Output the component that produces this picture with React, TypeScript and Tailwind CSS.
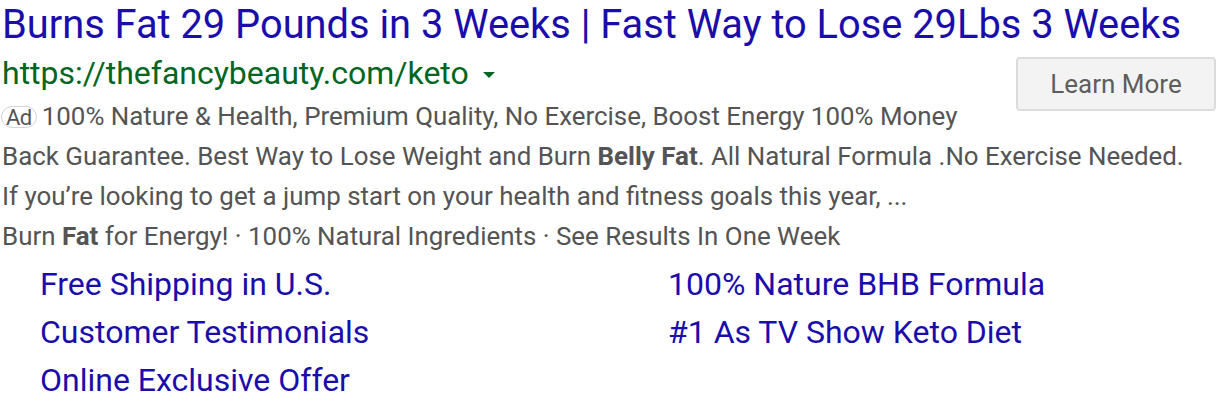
import React from 'react';

const sitelinks = [
  ['Free Shipping in U.S.', '100% Nature BHB Formula'],
  ['Customer Testimonials', '#1 As TV Show Keto Diet'],
  ['Online Exclusive Offer', ''],
];

export default function App() {
  return (
    <div className="w-[1216px] h-[410px] bg-white overflow-hidden font-['Roboto',sans-serif] pl-[2px]">
      <h1 className="text-[39.8px] leading-[50px] text-[#1a0dab] whitespace-nowrap">
        Burns Fat 29 Pounds in 3 Weeks | Fast Way to Lose 29Lbs 3 Weeks
      </h1>
      <button className="float-right mt-[7px] w-[200px] h-[54px] rounded-[4px] border-2 border-[#dcdcdc] bg-[#f3f3f3] text-[26px] text-[#5e5e5e]">
        Learn More
      </button>
      <div className="flex items-center h-[46px] text-[32px] text-[#006621]">
        <span>https://thefancybeauty.com/keto</span>
        <span className="ml-[14px] mt-[4px] w-0 h-0 border-x-[6px] border-x-transparent border-t-[6px] border-t-[#006621]" />
      </div>
      <div className="text-[25.9px] leading-[40px] text-[#545454] whitespace-nowrap">
        <div>
          <span className="inline-block pt-[1px] px-[4px] mr-[5px] -ml-[1px] rounded-full border-[1.5px] border-[#d4d4d4] text-[22px] leading-[19px] tracking-[-0.5px] align-baseline">
            Ad
          </span>
          100% Nature &amp; Health, Premium Quality, No Exercise, Boost Energy 100% Money
        </div>
        <div>
          Back Guarantee. Best Way to Lose Weight and Burn <b className="font-bold">Belly Fat</b>. All
          Natural Formula .No Exercise Needed.
        </div>
        <div>If you’re looking to get a jump start on your health and fitness goals this year, ...</div>
        <div>
          Burn <b className="font-bold">Fat</b> for Energy! · 100% Natural Ingredients · See Results In One
          Week
        </div>
      </div>
      <div className="grid grid-cols-[628px_1fr] pl-[38px] pt-[4px] text-[32px] leading-[48px] text-[#1a0dab]">
        {sitelinks.map(([a, b]) => (
          <React.Fragment key={a}>
            <span>{a}</span>
            <span>{b}</span>
          </React.Fragment>
        ))}
      </div>
    </div>
  );
}
